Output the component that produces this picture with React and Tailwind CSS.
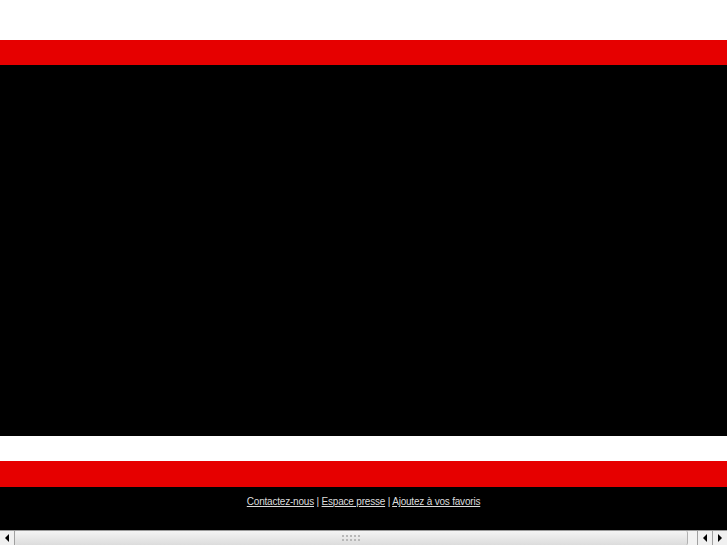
export default function App() {
  return (
    <div className="w-[727px] h-[545px] flex flex-col bg-white overflow-hidden" style={{ fontFamily: '"Liberation Sans", Arial, sans-serif' }}>
      <div className="h-[40px] bg-white" />
      <div className="h-[25px] bg-[#e60000]" />
      <div className="h-[371px] bg-black" />
      <div className="h-[25px] bg-white" />
      <div className="h-[26px] bg-[#e60000]" />
      <div className="h-[43px] bg-black flex justify-center pt-[8px]">
        <div className="text-[10px] leading-[14px] text-[#dcdcdc] tracking-[-0.2px]">
          <a className="underline">Contactez-nous</a>
          <span> | </span>
          <a className="underline">Espace presse</a>
          <span> | </span>
          <a className="underline">Ajoutez à vos favoris</a>
        </div>
      </div>
      <div className="h-[15px] flex bg-[#e8e8e8] border-t border-[#9a9a9a]">
        <div className="w-[15px] flex items-center justify-center border-r border-[#a0a0a0] bg-[#f0f0f0]">
          <svg width="6" height="8" viewBox="0 0 6 8"><path d="M5 0L1 4L5 8Z" fill="#000" /></svg>
        </div>
        <div className="w-[673px] flex items-center justify-center bg-gradient-to-b from-[#f4f4f4] to-[#dcdcdc] border-r border-[#b0b0b0] rounded-[2px]">
          <div className="grid grid-cols-5 gap-[2px]">
            {Array.from({ length: 10 }).map((_, i) => (
              <div key={i} className="w-[2px] h-[2px] bg-[#b8b8b8]" />
            ))}
          </div>
        </div>
        <div className="flex-1 bg-[#f2f2f2]" />
        <div className="w-[15px] flex items-center justify-center border-l border-[#a0a0a0] bg-[#f0f0f0]">
          <svg width="6" height="8" viewBox="0 0 6 8"><path d="M5 0L1 4L5 8Z" fill="#000" /></svg>
        </div>
        <div className="w-[15px] flex items-center justify-center border-l border-[#a0a0a0] bg-[#f0f0f0]">
          <svg width="6" height="8" viewBox="0 0 6 8"><path d="M1 0L5 4L1 8Z" fill="#000" /></svg>
        </div>
      </div>
    </div>
  );
}
